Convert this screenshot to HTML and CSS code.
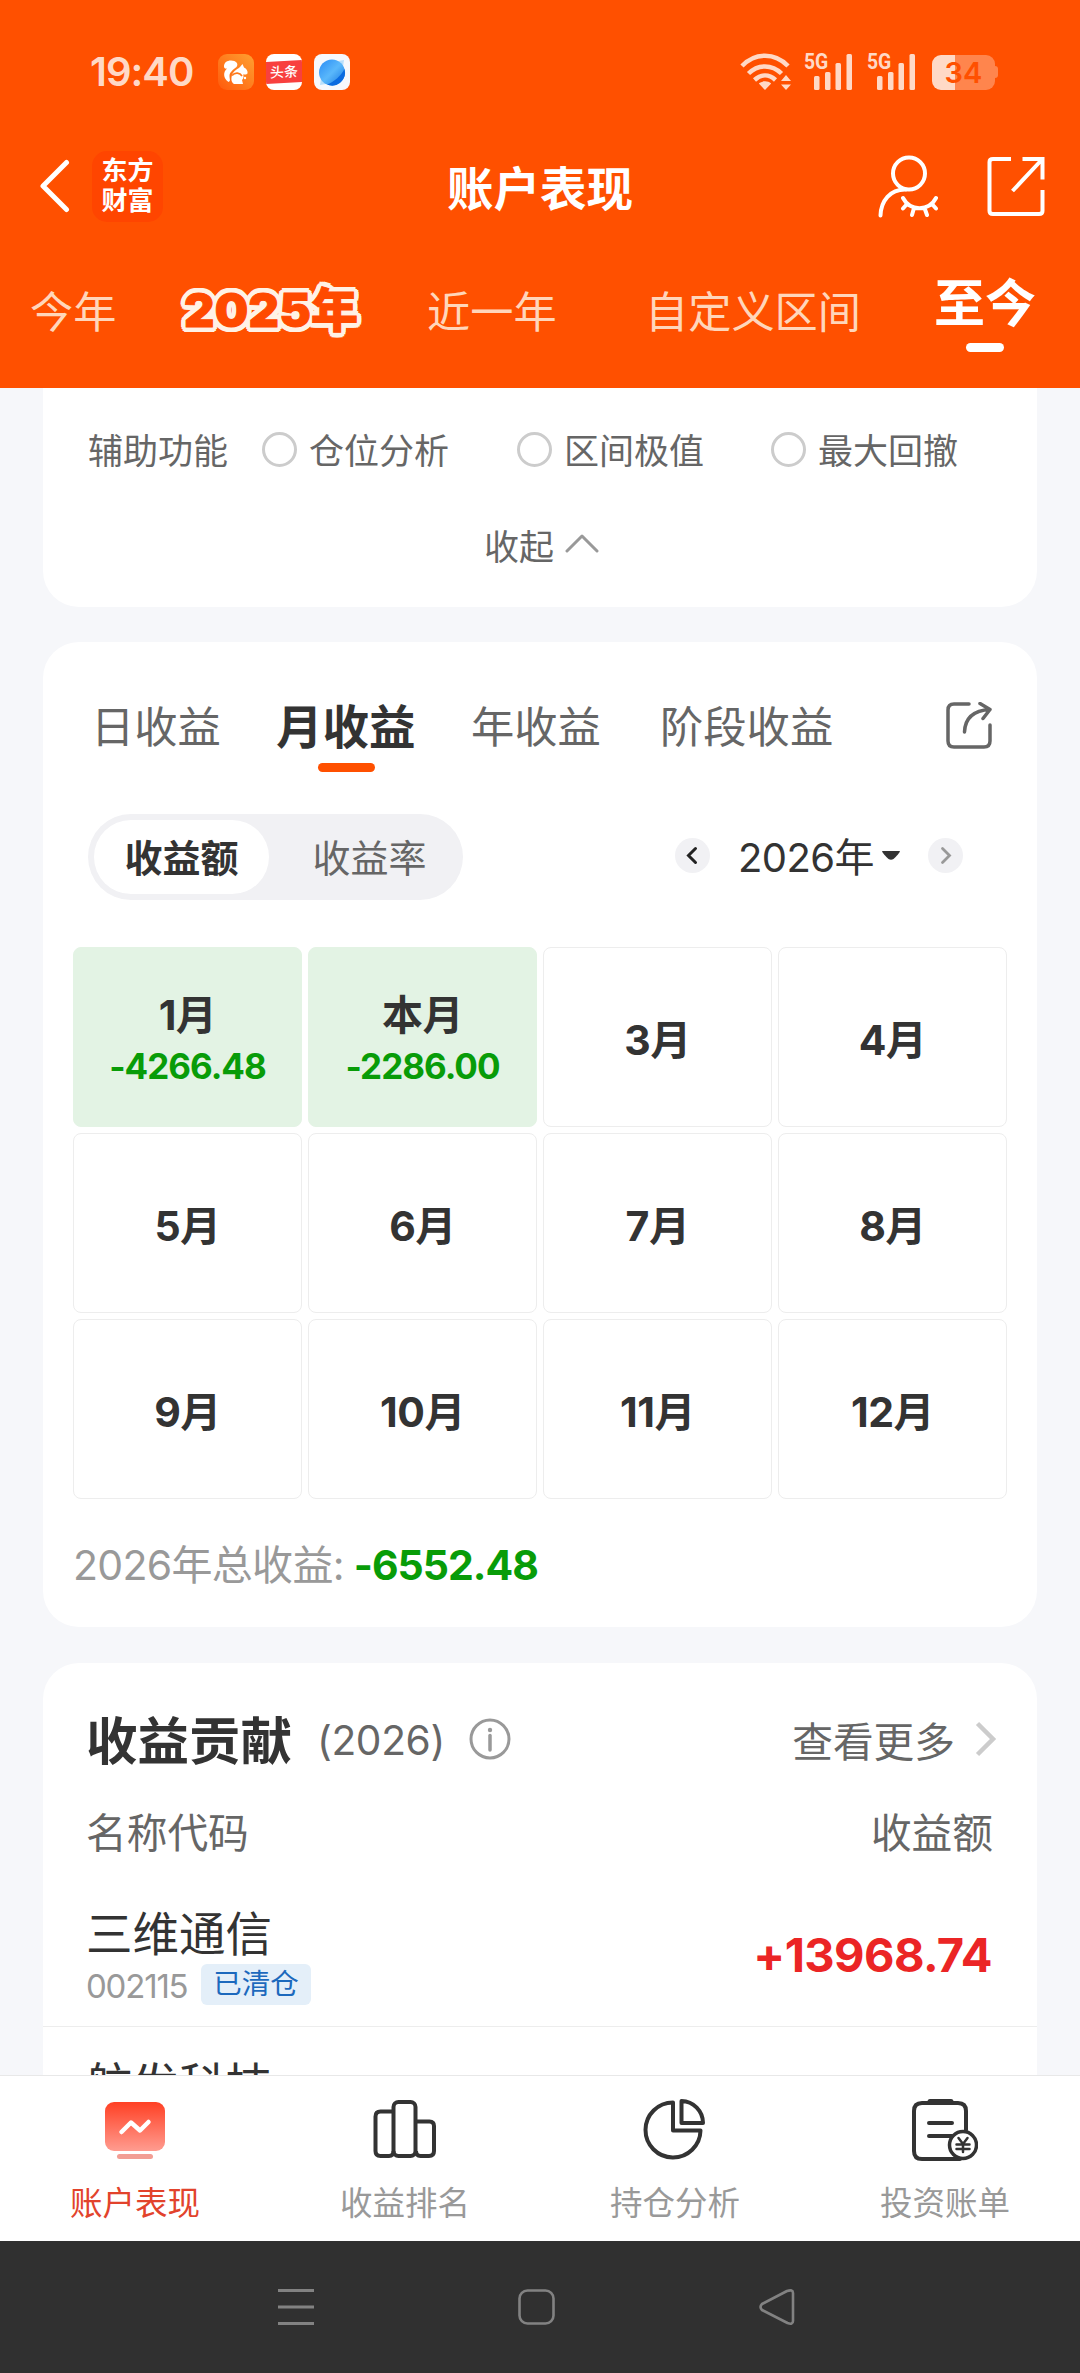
FILE: index.html
```html
<!DOCTYPE html>
<html lang="zh-CN">
<head>
<meta charset="utf-8">
<title>账户表现</title>
<link rel="stylesheet" href="styles.css">
</head>
<body>
<div class="screen">
  <header class="top">
    <div class="status">
      <div class="status-left">
        <span class="clock">19:40</span>
        <svg class="app" viewBox="0 0 36 36" width="36" height="36">
          <defs><linearGradient id="uc" x1="0" y1="1" x2="1" y2="0"><stop offset="0" stop-color="#ff5a0c"/><stop offset="1" stop-color="#ffa030"/></linearGradient></defs>
          <rect width="36" height="36" rx="9" fill="url(#uc)"/>
          <path d="M10.500 28C5 24 5 18 9 14.500C7 15 6 14 6 12.500C6 8.500 9 6.500 13 6.500C18 6.500 21 9.500 18.500 13C15 16 11.500 18 11.500 22C11.500 25 13 27 10.500 28Z" fill="#fff"/>
          <path d="M14 21C16 16 20 15 22 13L24.500 10L26 13.500C28.500 14.500 30 17 29.500 19.500C28 21 26 20.500 25 20.500C26 22 25.500 25 24 26L25 30H16C13 28 13 25 14 21Z" fill="#fff"/>
          <path d="M14 21.500C17 18 22 18.500 24 22" stroke="#ff7a1c" stroke-width="1.600" fill="none"/><circle cx="27" cy="24" r="1.200" fill="#fff"/>
        </svg>
        <span class="app toutiao"><span>头条</span></span>
        <svg class="app" viewBox="0 0 36 36" width="36" height="36">
          <defs><linearGradient id="pl" x1="0" y1="0" x2="1" y2="1"><stop offset="0" stop-color="#2a8bf5"/><stop offset=".5" stop-color="#5ab8fb"/><stop offset="1" stop-color="#1272e0"/></linearGradient></defs>
          <rect width="36" height="36" rx="8" fill="#f7f8fc"/>
          <path d="M24 7L30 6L29 13L12 30L6 31L7 24Z" fill="#b9dffb"/>
          <circle cx="18" cy="18.500" r="13" fill="url(#pl)"/>
          <path d="M30.500 15A13 13 0 0 1 13 30.500C20 28 27 22 30.500 15Z" fill="#0b6be0"/>
        </svg>
      </div>
      <div class="status-right">
        <svg viewBox="0 0 52 38" width="52" height="38" fill="none" stroke="#ffd9c6" stroke-width="4.500">
          <path d="M2 13C15-.7 35-.7 48 13M8.500 20.500C18 11 32 11 41.500 20.500M14.500 27C21 21 29 21 35.500 27"/>
          <path d="M25 37L18.800 30.600C22 27.600 28 27.600 31.200 30.600ZM46 22L51 28H41ZM46 37L41 31.500H51Z" fill="#ffd9c6" stroke="none"/>
        </svg>
        <span class="signal"><b>5G</b><svg viewBox="0 0 38 36" width="38" height="36" fill="#ffd9c6"><rect x="0" y="22" width="5.500" height="14" rx="1.500"/><rect x="11" y="18" width="5.500" height="18" rx="1.500"/><rect x="21.500" y="9" width="5.500" height="27" rx="1.500"/><rect x="32.500" y="0" width="5.500" height="36" rx="1.500"/></svg></span>
        <span class="signal"><b>5G</b><svg viewBox="0 0 38 36" width="38" height="36" fill="#ffd9c6"><rect x="0" y="22" width="5.500" height="14" rx="1.500"/><rect x="11" y="18" width="5.500" height="18" rx="1.500"/><rect x="21.500" y="9" width="5.500" height="27" rx="1.500"/><rect x="32.500" y="0" width="5.500" height="36" rx="1.500"/></svg></span>
        <span class="battery">34</span><span class="nub"></span>
      </div>
    </div>
    <div class="titlebar">
      <div class="title-left">
        <svg viewBox="0 0 30 54" width="30" height="54" fill="none" stroke="#fff" stroke-width="5" stroke-linecap="round" stroke-linejoin="round"><path d="M26.500 3.500L3 27L26.500 50.500"/></svg>
        <span class="logo"><span>东方</span><span>财富</span></span>
      </div>
      <h1>账户表现</h1>
      <div class="title-right">
        <svg viewBox="0 0 60 63" width="60" height="63" fill="none" stroke="#fff" stroke-width="4" stroke-linecap="round"><circle cx="31" cy="18.500" r="16"/><path d="M2.500 60.500C3 46 12 34 28 34.500M25 43C32 56.500 51 56.500 58 43M29 49L25 53.500M36 53L34 60M46.500 53L49 60M54 49L58 53.500"/></svg>
        <svg viewBox="0 0 58 60" width="58" height="60" fill="none" stroke="#fff" stroke-width="4"><path d="M24 3H6Q2.500 3 2.500 6V55Q2.500 58 6 58H52Q55.500 58 55.500 55V34M35.500 3H55.500V23.500M55 3.500L25.500 35"/></svg>
      </div>
    </div>
    <nav class="ranges">
      <span>今年</span><span class="y2025">2025年</span><span>近一年</span><span>自定义区间</span><span class="now">至今</span>
    </nav>
  </header>

  <main>
    <section class="card assist">
      <div class="assist-row">
        <span>辅助功能</span>
        <label><i></i>仓位分析</label>
        <label><i></i>区间极值</label>
        <label><i></i>最大回撤</label>
      </div>
      <div class="collapse">收起<svg viewBox="0 0 34 20" width="34" height="20" fill="none" stroke="#999" stroke-width="3" stroke-linecap="round" stroke-linejoin="round"><path d="M2 18L17 3L32 18"/></svg></div>
    </section>

    <section class="card profit">
      <div class="tabs">
        <span>日收益</span><span class="on">月收益</span><span>年收益</span><span>阶段收益</span>
        <svg viewBox="0 0 46 47" width="46" height="47" fill="none" stroke="#666" stroke-width="3.500" stroke-linecap="round" stroke-linejoin="round"><path d="M23 2H8Q2 2 2 8V39Q2 45 8 45H38Q44 45 44 39V23"/><path d="M18.500 30C19 16 27 8.500 44 7.500M34 1.500L44 7.500L37 16.500"/></svg>
      </div>
      <div class="controls">
        <div class="segment"><span class="on">收益额</span><span>收益率</span></div>
        <div class="year">
          <svg viewBox="0 0 35 35" width="35" height="35"><circle cx="17.500" cy="17.500" r="17.500" fill="#f1f1f4"/><path d="M20.500 10.500L13.500 17.500L20.500 24.500" fill="none" stroke="#222" stroke-width="3" stroke-linecap="round"/></svg>
          <span class="year-text">2026年</span>
          <svg class="drop" viewBox="0 0 18 9" width="18" height="9"><path d="M0 0H18Q17 3 11.500 8Q9 9.500 6.500 8Q1 3 0 0Z" fill="#333"/></svg>
          <svg viewBox="0 0 35 35" width="35" height="35"><circle cx="17.500" cy="17.500" r="17.500" fill="#f1f1f4"/><path d="M14.500 10.500L21.500 17.500L14.500 24.500" fill="none" stroke="#999" stroke-width="2.800" stroke-linecap="round"/></svg>
        </div>
      </div>
      <div class="months">
        <div class="loss"><span>1月</span><b>-4266.48</b></div>
        <div class="loss"><span>本月</span><b>-2286.00</b></div>
        <div>3月</div><div>4月</div>
        <div>5月</div><div>6月</div><div>7月</div><div>8月</div>
        <div>9月</div><div>10月</div><div>11月</div><div>12月</div>
      </div>
      <div class="total"><span>2026年总收益:</span><b>-6552.48</b></div>
    </section>

    <section class="card contrib">
      <div class="contrib-head">
        <h2>收益贡献</h2><span class="period">(2026)</span>
        <svg class="info" viewBox="0 0 42 42" width="42" height="42" fill="none" stroke="#999" stroke-width="3"><circle cx="21" cy="21" r="19"/><path d="M21 17.500V32" stroke-width="3.500" stroke-linecap="round"/><circle cx="21" cy="12" r="2.200" fill="#999" stroke="none"/></svg>
        <span class="more">查看更多</span>
        <svg class="info" viewBox="0 0 22 36" width="22" height="36" fill="none" stroke="#ccc" stroke-width="4.500"><path d="M2.500 2.500L18 18L2.500 33.500"/></svg>
      </div>
      <div class="cols"><span>名称代码</span><span>收益额</span></div>
      <div class="stock">
        <div><div class="name">三维通信</div><div class="code"><span>002115</span><em>已清仓</em></div></div>
        <b>+13968.74</b>
      </div>
      <div class="stock next"><div class="name">航发科技</div></div>
    </section>
  </main>

  <nav class="bottom">
    <a class="on"><svg viewBox="0 0 66 64" width="66" height="64"><defs><linearGradient id="tv" x1="0" y1="0" x2="0" y2="1"><stop offset="0" stop-color="#ff4024"/><stop offset="1" stop-color="#ff9c90"/></linearGradient></defs><rect x="3" y="4" width="60" height="49" rx="9" fill="url(#tv)"/><path d="M19.500 34L29 24.500L38 32.500L46.500 24" fill="none" stroke="#fff" stroke-width="4.500" stroke-linecap="round" stroke-linejoin="round"/><rect x="15" y="56" width="36" height="5" rx="2.500" fill="#f29e94"/></svg><span>账户表现</span></a>
    <a><svg viewBox="0 0 66 64" width="66" height="64" fill="none" stroke="#333" stroke-width="4"><path d="M21 13.500H8.500Q3.500 13.500 3.500 18.500V53Q3.500 58 8.500 58H17Q21.500 58 21.500 53"/><rect x="21.500" y="4" width="22" height="54" rx="5"/><path d="M44 23.500H57.500Q62 23.500 62 28V53Q62 58 57 58H48.500Q44 58 44 53"/></svg><span>收益排名</span></a>
    <a><svg viewBox="0 0 66 64" width="66" height="64" fill="none" stroke="#333" stroke-width="4" stroke-linejoin="round"><path d="M31 4.500A27.500 27.500 0 1 0 58.500 32.500H31Z"/><path d="M39.500 3A22 22 0 0 1 61 25H39.500Z"/></svg><span>持仓分析</span></a>
    <a><svg viewBox="0 0 66 64" width="66" height="64" fill="none" stroke="#333" stroke-width="4" stroke-linecap="round"><path d="M54 32V13Q54 5 46 5H10Q2 5 2 13V53Q2 61 10 61H48"/><path d="M18 3.500H39" stroke-width="5"/><path d="M17 25H40M17 38H40"/><circle cx="51" cy="47" r="13.500" fill="#fff" stroke-width="3.500"/><path d="M46.500 40L51 46L55.500 40M51 46V54M44.500 46.500H57.500M44.500 51H57.500" stroke-width="2.500"/></svg><span>投资账单</span></a>
  </nav>
  <div class="sysbar">
    <svg viewBox="0 0 36 36" width="36" height="36" stroke="#828282" stroke-width="3"><path d="M0 1.500H36M0 18H36M0 34.500H36"/></svg>
    <svg viewBox="0 0 37 36" width="37" height="36" fill="none" stroke="#828282" stroke-width="2.600"><rect x="1.500" y="1.500" width="34" height="33" rx="8"/></svg>
    <svg viewBox="0 0 36 36" width="36" height="36" fill="none" stroke="#828282" stroke-width="2.600" stroke-linejoin="round"><path d="M28 2Q34 0 34 4V32Q34 36 28.500 34L3 21Q0 18 3 15Z"/></svg>
  </div>
</div>
</body>
</html>
```
FILE: styles.css
```css
* { box-sizing: border-box; }
body { margin: 0; font-family: Inter, "Noto Sans CJK SC", sans-serif; color: #333; background: #f6f7fa; }
svg { display: block; flex: none; }
h1, h2 { margin: 0; }
b { font-weight: 700; }
span, div, label, em { white-space: nowrap; }
.screen { width: 1080px; height: 2373px; display: flex; flex-direction: column; overflow: hidden; }

/* orange header */
.top { height: 388px; flex: none; background: #ff5000; color: #fff; }
.status { height: 144px; display: flex; justify-content: space-between; align-items: center; padding: 0 82px 0 90px; }
.status-left, .status-right { display: flex; align-items: center; }
.clock { width: 128px; font-size: 40px; line-height: 48px; font-weight: 600; color: #ffd9c6; letter-spacing: -1px; }
.app { margin-right: 12px; }
.toutiao { width: 36px; height: 36px; border-radius: 8px; background: #fff; overflow: hidden; display: flex; align-items: center; }
.toutiao span { width: 36px; height: 22px; background: #f8403f; font-size: 14px; line-height: 22px; text-align: center; font-weight: 500; transform: skewY(-3deg); }
.signal { width: 48px; margin-left: 12px; display: grid; justify-items: end; }
.signal + .signal { margin-left: 15px; }
.signal b { grid-area: 1 / 1; justify-self: start; font-size: 22px; line-height: 16px; font-family: Roboto, sans-serif; font-weight: 700; color: #ffd9c6; transform: scaleX(.88); transform-origin: 0 0; }
.signal svg { grid-area: 1 / 1; }
.battery { width: 63px; height: 35px; margin-left: 17px; border-radius: 9px; background: linear-gradient(90deg, #ffd9c6 23px, #ff854d 23px); color: #ff5000; font-size: 29px; line-height: 35px; font-weight: 600; text-align: center; }
.nub { width: 3px; height: 12px; border-radius: 0 3px 3px 0; background: #ff854d; }
.titlebar { height: 84px; display: grid; grid-template-columns: 1fr auto 1fr; align-items: center; padding: 0 35px 0 40px; }
.title-left { display: flex; align-items: center; gap: 22px; }
.logo { width: 71px; height: 71px; border-radius: 15px; background: #ff4500; display: flex; flex-direction: column; align-items: center; justify-content: center; font-size: 26px; line-height: 30px; font-weight: 700; }
h1 { font-size: 46.500px; line-height: 60px; font-weight: 700; padding: 6px 5px 0 0; }
.title-right { display: flex; justify-content: flex-end; align-items: center; gap: 49px; }
.ranges { height: 160px; padding: 0 0 0 30px; display: grid; grid-template-columns: 154px 243px 218px 289px 1fr; align-items: center; font-size: 43.200px; line-height: 60px; color: #ffd6bb; }
.ranges span { padding-top: 7px; }
.ranges .y2025 { font-size: 47px; font-weight: 900; color: #ff4a00; -webkit-text-stroke: 1px #ff4a00; padding-top: 3px; letter-spacing: .4px;
  text-shadow: 5px 0 #fff2e6, -5px 0 #fff2e6, 0 5px #fff2e6, 0 -5px #fff2e6, 3.5px 3.5px #fff2e6, -3.5px 3.5px #fff2e6, 3.5px -3.5px #fff2e6, -3.5px -3.5px #fff2e6, 4.6px 2px #fff2e6, -4.6px 2px #fff2e6, 4.6px -2px #fff2e6, -4.6px -2px #fff2e6, 2px 4.6px #fff2e6, -2px 4.6px #fff2e6, 2px -4.6px #fff2e6, -2px -4.6px #fff2e6; }
.ranges .now { align-self: start; padding-top: 46px; width: 102px; font-size: 51px; font-weight: 700; color: #fff; }
.now::after { content: ""; display: block; width: 38px; height: 9px; margin: 9px auto 0; border-radius: 5px; background: #fff; }

/* cards */
main { height: 1687px; flex: none; padding: 0 43px; overflow: hidden; }
.card { background: #fff; border-radius: 36px; }
.assist { height: 219px; border-radius: 0 0 36px 36px; padding: 33px 0 0 45px; font-size: 35px; line-height: 60px; color: #666; }
.assist-row { display: grid; grid-template-columns: 174px 255px 254px 1fr; align-items: center; }
.assist label { display: flex; align-items: center; gap: 12px; }
.assist i { width: 35px; height: 35px; margin-top: -4px; border: 3px solid #ccc; border-radius: 50%; }
.collapse { margin: 36px 0 0 396px; display: flex; align-items: center; gap: 11px; }
.collapse svg { margin-top: -9px; }
.profit { height: 985px; margin-top: 35px; padding: 54px 30px 0; }
.tabs { display: grid; grid-template-columns: 185px 195px 189px 286px 46px; padding-left: 18px; font-size: 43.300px; line-height: 62px; color: #666; }
.tabs .on { font-size: 46.500px; font-weight: 700; color: #333; width: 140px; }
.tabs .on::after { content: ""; display: block; width: 57px; height: 9px; margin: 5px auto 0; border-radius: 5px; background: #ff5000; }
.tabs svg { margin-top: 6px; }
.controls { display: flex; justify-content: space-between; align-items: center; height: 86px; margin: 42px 44px 47px 15px; }
.segment { width: 375px; height: 86px; padding: 6px; border-radius: 43px; background: #f1f1f4; display: flex; font-size: 38px; line-height: 77px; color: #666; }
.segment span { width: 175px; height: 74px; text-align: center; }
.segment span + span { width: 188px; padding-left: 13px; }
.segment .on { border-radius: 37px; background: #fff; color: #333; font-weight: 700; }
.year { display: flex; align-items: center; margin-top: -3px; }
.year-text { width: 143px; margin-left: 28px; font-size: 40px; line-height: 60px; letter-spacing: -.6px; padding-top: 5px; }
.drop { margin: 0 28px 0 1px; }
.months { display: grid; grid-template-columns: repeat(4, 229px); grid-auto-rows: 180px; gap: 6px; font-size: 41px; font-weight: 700; }
.months > div { border: 1px solid #ededed; border-radius: 8px; display: flex; flex-direction: column; align-items: center; justify-content: center; line-height: 50px; padding-top: 5px; letter-spacing: -.5px; }
.months .loss { background: #e3f3e4; border-color: #e3f3e4; padding-top: 6px; }
.loss b { font-size: 35px; color: #089c08; letter-spacing: -1px; padding-top: 1px; }
.total { display: flex; align-items: center; gap: 10px; margin-top: 37px; font-size: 41px; line-height: 58px; color: #999; }
.total span { letter-spacing: -.7px; }
.total b { color: #089c08; letter-spacing: -1px; }
.contrib { height: 600px; margin-top: 36px; padding-top: 48px; }
.contrib-head { display: flex; align-items: center; height: 60px; padding: 0 40px 0 43px; font-size: 40.700px; color: #666; }
.info { margin-top: -4px; }
h2 { font-size: 51.500px; color: #333; line-height: 60px; }
.period { margin: -2px 24px 0 25px; letter-spacing: -.4px; }
.more { margin: -4px 20px 0 auto; }
.cols { display: flex; justify-content: space-between; padding: 0 44px 0 43px; margin-top: 33px; font-size: 40.700px; line-height: 60px; color: #666; }
.stock { height: 163px; border-bottom: 1px solid #ededed; padding: 41px 45px 0 43px; display: flex; justify-content: space-between; }
.stock.next { height: 153px; padding-top: 29px; border: 0; }
.name { font-size: 46.500px; line-height: 58px; }
.code { display: flex; align-items: center; height: 42px; font-size: 33px; color: #999; letter-spacing: -1.200px; }
.code span { width: 115px; padding-top: 4px; }
.code em { width: 110px; height: 41px; border-radius: 6px; background: #e4eff9; color: #1c69bd; font-style: normal; font-size: 28.500px; line-height: 39px; text-align: center; letter-spacing: 0; }
.stock b { font-size: 47px; line-height: 60px; padding-top: 20px; color: #eb2525; letter-spacing: -.6px; }

/* bottom navigation */
.bottom { height: 166px; flex: none; background: #fff; border-top: 1px solid #e8e8e8; display: grid; grid-template-columns: repeat(4, 270px); }
.bottom a { display: flex; flex-direction: column; align-items: center; padding-top: 22px; font-size: 32.500px; line-height: 48px; color: #999; }
.bottom span { margin-top: 18px; }
.bottom a.on { color: #e2432c; }
.sysbar { height: 132px; flex: none; background: #303030; display: flex; align-items: center; padding-left: 278px; gap: 204px; }
```
